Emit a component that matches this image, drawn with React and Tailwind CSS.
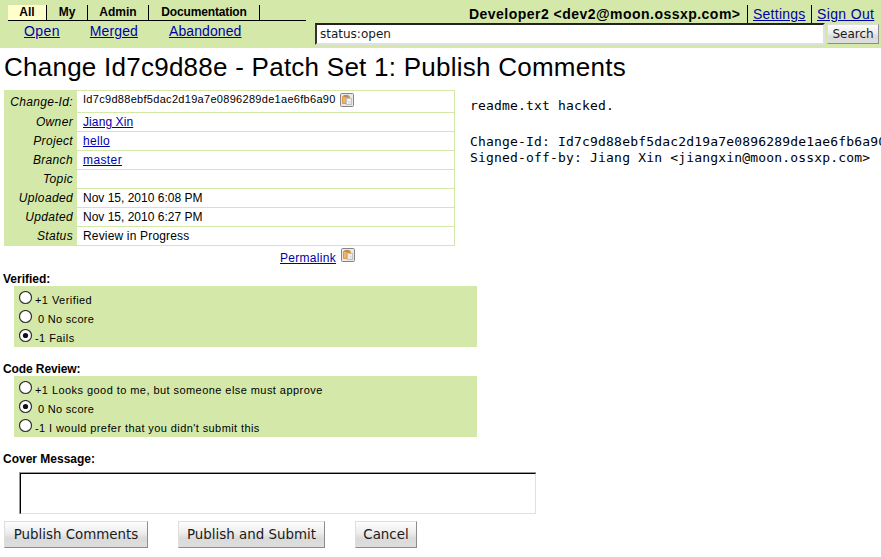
import React from "react";

const sans = "font-['Liberation_Sans',Arial,sans-serif]";
const dejavu = "font-['DejaVu_Sans',sans-serif]";
const link = "text-[#0000aa] underline";

function ClipIcon({ className }) {
  return (
    <svg className={className} width="14" height="14" viewBox="0 0 14 14">
      <rect x="0.5" y="0.5" width="13" height="13" rx="1" fill="#e9e9e9" stroke="#858585" />
      <rect x="2" y="3" width="8" height="8" rx="1" fill="#d9984a" />
      <rect x="3.5" y="2" width="5" height="2" fill="#c08a50" />
      <rect x="3" y="4" width="2.5" height="6" fill="#edb66c" />
      <rect x="6.5" y="5.5" width="5" height="6" fill="#f0f0f0" stroke="#c2c2c2" />
      <path d="M8 8.5h3M8 10h3" stroke="#d8d8d8" strokeWidth="0.7" />
    </svg>
  );
}

function Radio({ checked }) {
  return (
    <svg className="block shrink-0" width="14" height="14" viewBox="0 0 14 14">
      <circle cx="6.5" cy="6.5" r="6" fill="#fff" stroke="#333" strokeWidth="1.2" />
      {checked && <circle cx="6.5" cy="6.5" r="2.6" fill="#111" />}
    </svg>
  );
}

function Row({ label, h = "h-[19px]", children }) {
  return (
    <div className={`flex ${h}`}>
      <div className="w-[73px] shrink-0 pr-[4px] text-right italic tracking-[0.35px]">{label}</div>
      <div className="flex flex-1 border-b border-r border-[#d4e9a9] bg-white pl-[6px]">{children}</div>
    </div>
  );
}

function Option({ checked, children, indent = "ml-[2px]", tracking = "tracking-[0.44px]" }) {
  return (
    <div className="flex h-[19px] pl-[5px] pt-[2px]">
      <Radio checked={checked} />
      <span className={`${indent} ${tracking} mt-[2px] h-[14px] whitespace-pre text-[11px] leading-[14px]`}>{children}</span>
    </div>
  );
}

function Button({ className, children }) {
  return (
    <button className={`${className} ${dejavu} h-[27px] whitespace-nowrap border border-b-[#8c8c8c] border-l-[#dedede] border-r-[#8c8c8c] border-t-[#dedede] bg-[linear-gradient(#fdfdfd,#ececec_45%,#dadada_65%,#dedede)] text-[13.4px] leading-[25px] text-[#1a1a1a]`}>
      {children}
    </button>
  );
}

function Heading({ className = "", children }) {
  return <h2 className={`${className} ml-[3px] h-[15px] font-bold leading-[16px]`}>{children}</h2>;
}

export default function App() {
  return (
    <div className={`h-[557px] w-[881px] overflow-hidden bg-white text-[12px] text-black ${sans}`}>
      <header className="flex h-[48px] bg-[#d4e9a9]">
        <nav className="ml-[8px] w-[298px] shrink-0 pt-[5px]">
          <div className="flex h-[16px] border-b border-black text-center text-[12px] font-bold leading-[14px]">
            <span className="w-[39px] border-r border-black bg-[#ffffcc]">All</span>
            <span className="w-[41px] border-r border-black">My</span>
            <span className="w-[61px] border-r border-black">Admin</span>
            <span className="w-[111px] border-r border-black tracking-[-0.15px]">Documentation</span>
          </div>
          <div className="flex pl-[16px] text-[14px] leading-[20px]">
            <a className={`${link} mr-[30px] tracking-[0.4px]`}>Open</a>
            <a className={`${link} mr-[31px] tracking-[0.1px]`}>Merged</a>
            <a className={`${link} tracking-[0.1px]`}>Abandoned</a>
          </div>
        </nav>
        <div className="ml-[9px] min-w-0 flex-1">
          <div className="mt-[5px] flex h-[18px] text-[14px] leading-[18px]">
            <b className="ml-[154px] w-[279px] shrink-0 whitespace-nowrap border-r border-black tracking-[0.47px]">Developer2 &lt;dev2@moon.ossxp.com&gt;</b>
            <span className="w-[64px] shrink-0 border-r border-black pl-[5px]"><a className={`${link} tracking-[0.25px]`}>Settings</a></span>
            <a className={`${link} ml-[5px] whitespace-nowrap tracking-[0.35px]`}>Sign Out</a>
          </div>
          <div className="flex">
            <div className={`${dejavu} h-[22px] w-[510px] border-2 border-b-[#e0e0e0] border-l-[#333] border-r-[#e0e0e0] border-t-[#222] bg-white pl-[3px] text-[12px] leading-[18px] text-[#1a1a1a]`}>status:open</div>
            <button className={`${dejavu} ml-[2px] mt-[1px] h-[20px] w-[52px] border border-b-[#8c8c8c] border-l-[#dedede] border-r-[#8c8c8c] border-t-[#dedede] bg-[linear-gradient(#fdfdfd,#ececec_45%,#dadada_65%,#dedede)] text-[12px] leading-[17px] text-[#1a1a1a]`}>Search</button>
          </div>
        </div>
      </header>
      <h1 className="ml-[4px] h-[42px] whitespace-nowrap text-[26px] leading-[39px] tracking-[0.25px]">Change Id7c9d88e - Patch Set 1: Publish Comments</h1>
      <div className="flex h-[156px] pl-[4px]">
        <div className="w-[451px] shrink-0 border-t border-[#d4e9a9] bg-[#d4e9a9] leading-[18px]">
          <Row label={<span className="leading-[22px]">Change-Id:</span>} h="h-[22px]">
            <span className="text-[11px] leading-[17px] tracking-[0.3px]">Id7c9d88ebf5dac2d19a7e0896289de1ae6fb6a90</span>
            <ClipIcon className="ml-[4px] mt-[2px]" />
          </Row>
          <Row label="Owner"><a className={`${link} tracking-[0.1px]`}>Jiang Xin</a></Row>
          <Row label="Project"><a className={`${link} tracking-[0.3px]`}>hello</a></Row>
          <Row label="Branch"><a className={`${link} tracking-[0.4px]`}>master</a></Row>
          <Row label="Topic" />
          <Row label="Uploaded">Nov 15, 2010 6:08 PM</Row>
          <Row label="Updated">Nov 15, 2010 6:27 PM</Row>
          <Row label="Status"><span className="tracking-[0.17px]">Review in Progress</span></Row>
        </div>
        <div className="ml-[15px] whitespace-pre font-['DejaVu_Sans_Mono',monospace] text-[13px] leading-[16px] tracking-[0.18px]">
          <p className="mt-[8px]">readme.txt hacked.</p>
          <p className="mt-[20px]">Change-Id: Id7c9d88ebf5dac2d19a7e0896289de1ae6fb6a90</p>
          <p>Signed-off-by: Jiang Xin &lt;jiangxin@moon.ossxp.com&gt;</p>
        </div>
      </div>
      <div className="flex h-[25px] pl-[280px]">
        <a className={`${link} mt-[3px] h-[18px] leading-[18px] tracking-[0.3px]`}>Permalink</a>
        <ClipIcon className="ml-[5px] mt-[2px]" />
      </div>
      <Heading>Verified:</Heading>
      <div className="ml-[14px] h-[61px] w-[463px] bg-[#d4e9a9] pt-[3px]">
        <Option>+1 Verified</Option>
        <Option indent="ml-[5px]" tracking="tracking-[0.3px]">0 No score</Option>
        <Option checked>-1 Fails</Option>
      </div>
      <Heading className="mt-[14px] tracking-[-0.1px]">Code Review:</Heading>
      <div className="ml-[14px] h-[61px] w-[463px] bg-[#d4e9a9] pt-[3px]">
        <Option>+1 Looks good to me, but someone else must approve</Option>
        <Option checked indent="ml-[5px]" tracking="tracking-[0.3px]">0 No score</Option>
        <Option tracking="tracking-[0.41px]">-1 I would prefer that you didn't submit this</Option>
      </div>
      <Heading className="mt-[14px]">Cover Message:</Heading>
      <div className="ml-[19px] mt-[6px] h-[42px] w-[517px] border-l border-t border-[#999]">
        <div className="h-full border border-b-[#e0e0e0] border-l-black border-r-[#e0e0e0] border-t-black" />
      </div>
      <div className="ml-[4px] mt-[7px] flex gap-[30px]">
        <Button className="w-[144px]">Publish Comments</Button>
        <Button className="w-[147px]">Publish and Submit</Button>
        <Button className="w-[62px]">Cancel</Button>
      </div>
    </div>
  );
}
